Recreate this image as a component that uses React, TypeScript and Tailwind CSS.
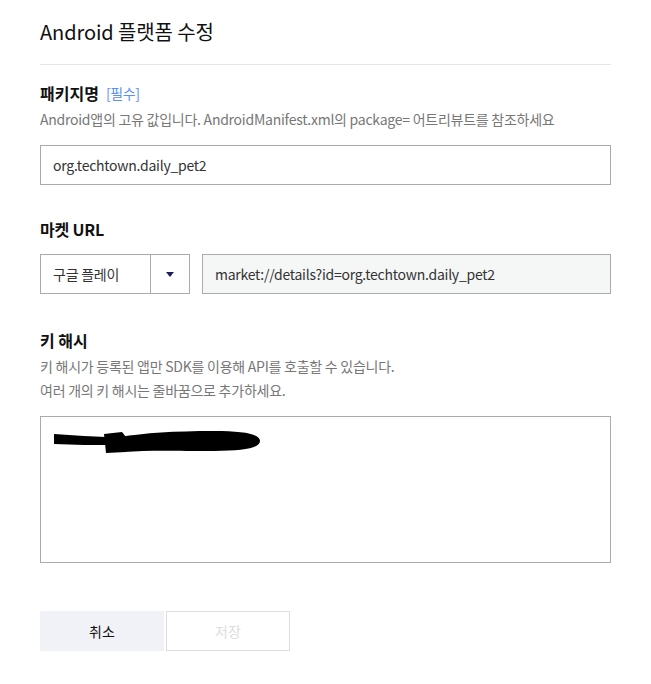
import React from "react";

export default function App() {
  const font = { fontFamily: '"Noto Sans CJK KR", "Noto Sans", sans-serif' };
  return (
    <div className="w-[651px] h-[684px] bg-white" style={font}>
      <div className="pl-[40px] w-[611px] pt-[17px]">
        <h1 className="text-[20px] leading-[30px] text-[#111] font-normal tracking-[-0.1px]">Android 플랫폼 수정</h1>
        <div className="mt-[17px] h-px bg-[#e5e5e5]" />

        <div className="mt-[16px] flex items-center gap-[7px]">
          <span className="text-[16px] leading-[24px] font-bold text-[#111]">패키지명</span>
          <span className="text-[14px] leading-[24px] text-[#5b8ff0] tracking-[-0.4px]">[필수]</span>
        </div>
        <p className="mt-[2px] text-[14px] leading-[24px] text-[#777] tracking-[-0.25px]">
          Android앱의 고유 값입니다. AndroidManifest.xml의 package= 어트리뷰트를 참조하세요
        </p>
        <div className="mt-[14px] h-[40px] border border-[#aaa] flex items-center pl-[12px] text-[14px] text-[#333] tracking-[-0.25px]">
          org.techtown.daily_pet2
        </div>

        <div className="mt-[32px] text-[16px] leading-[24px] font-bold text-[#111] tracking-[-0.2px]">마켓 URL</div>
        <div className="mt-[13px] flex gap-[12px]">
          <div className="w-[150px] h-[40px] border border-[#aaa] flex">
            <div className="w-[110px] border-r border-[#aaa] flex items-center pl-[12px] text-[14px] text-[#333] tracking-[-0.25px]">
              구글 플레이
            </div>
            <div className="flex-1 flex items-center justify-center">
              <svg width="8" height="5" viewBox="0 0 8 5">
                <path d="M0 0 L8 0 L4 5 Z" fill="#1a1f5c" />
              </svg>
            </div>
          </div>
          <div className="flex-1 h-[40px] border border-[#aaa] bg-[#f5f7f7] flex items-center pl-[12px] text-[14px] text-[#333] tracking-[-0.25px]">
            market://details?id=org.techtown.daily_pet2
          </div>
        </div>

        <div className="mt-[34px] text-[16px] leading-[24px] font-bold text-[#111]">키 해시</div>
        <p className="mt-[2px] text-[14px] leading-[24px] text-[#777] tracking-[-0.25px]">
          키 해시가 등록된 앱만 SDK를 이용해 API를 호출할 수 있습니다.
        </p>
        <p className="text-[14px] leading-[24px] text-[#777] tracking-[-0.25px]">여러 개의 키 해시는 줄바꿈으로 추가하세요.</p>
        <div className="mt-[14px] h-[147px] border border-[#aaa] relative">
          <svg className="absolute left-[13px] top-[14px]" width="210" height="26" viewBox="0 0 210 26">
            <path d="M0 3 L30 5 L52 6 L52 14 L30 14 L0 13 Z" fill="#000" />
            <path d="M50 3 L68 1 L72 6 L72 21 L52 22 Z" fill="#000" />
            <path
              d="M66 6 C90 2 120 0 160 0 C190 0 206 3 206 10 C206 17 190 20 160 20 C120 20 95 19 70 21 Z"
              fill="#000"
            />
          </svg>
        </div>

        <div className="mt-[48px] flex gap-[2px]">
          <button className="w-[124px] h-[40px] bg-[#f1f2f8] text-[14px] text-[#111]">취소</button>
          <button className="w-[124px] h-[40px] border border-[#ddd] bg-white text-[14px] text-[#ddd]">저장</button>
        </div>
      </div>
    </div>
  );
}
